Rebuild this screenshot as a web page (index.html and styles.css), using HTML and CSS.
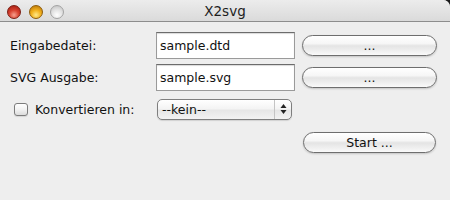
FILE: index.html
```html
<!DOCTYPE html>
<html>
<head>
<meta charset="utf-8">
<link rel="stylesheet" href="styles.css">
</head>
<body>
<div class="window">
  <div class="titlebar">
    <div class="lights">
      <span class="light red"></span>
      <span class="light yellow"></span>
      <span class="light gray"></span>
    </div>
    <div class="title">X2svg</div>
  </div>
  <div class="content">
    <div class="label">Eingabedatei:</div>
    <div class="field">sample.dtd</div>
    <div class="button">...</div>

    <div class="label">SVG Ausgabe:</div>
    <div class="field">sample.svg</div>
    <div class="button">...</div>

    <div class="label check-label"><span class="checkbox"></span>Konvertieren in:</div>
    <div class="popup"><span class="popup-text">--kein--</span><span class="popup-arrows"><svg width="7" height="12" viewBox="0 0 7 12"><path d="M3.5 1 L6.5 5 L0.5 5 Z" fill="#222"/><path d="M3.5 11 L6.5 7 L0.5 7 Z" fill="#222"/></svg></span></div>
    <div class="spacer"></div>

    <div class="spacer"></div>
    <div class="spacer"></div>
    <div class="button start">Start ...</div>
  </div>
</div>
</body>
</html>
```

FILE: styles.css
```css
html, body {
  margin: 0;
  padding: 0;
  background: #1a1a1a;
}
body {
  width: 450px;
  height: 200px;
  overflow: hidden;
  font-family: "DejaVu Sans", "Liberation Sans", sans-serif;
}
.window {
  width: 450px;
  height: 200px;
  background: #eeeeee;
  border-top-right-radius: 7px;
  overflow: hidden;
}
.titlebar {
  position: relative;
  height: 21px;
  background: linear-gradient(#ececec, #dadada);
  border-bottom: 1px solid #8d8d8d;
}
.lights {
  position: absolute;
  left: 7px;
  top: 5px;
  display: flex;
  gap: 7.5px;
}
.light {
  width: 14px;
  height: 14px;
  border-radius: 50%;
  box-sizing: border-box;
}
.red {
  background: radial-gradient(circle at 50% 75%, #f7a08e 0%, #d8412f 45%, #9c1a10 100%);
  border: 1px solid #7b1d12;
}
.yellow {
  background: radial-gradient(circle at 50% 75%, #ffe98a 0%, #f2b11e 45%, #b06d05 100%);
  border: 1px solid #8d5c0c;
}
.gray {
  background: radial-gradient(circle at 50% 75%, #ffffff 0%, #e2e2e2 50%, #bdbdbd 100%);
  border: 1px solid #a3a3a3;
}
.title {
  text-align: center;
  font-size: 13.5px;
  line-height: 23px;
  color: #1e1e1e;
}
.content {
  display: grid;
  grid-template-columns: 146px 146px 135px;
  grid-template-rows: 27px 27px 26px 26px;
  row-gap: 5px;
  padding: 10px 0 0 10px;
  align-items: center;
}
.label {
  font-size: 12.5px;
  color: #111;
}
.check-label {
  display: flex;
  align-items: center;
  margin-left: 4px;
}
.checkbox {
  width: 14px;
  height: 13px;
  box-sizing: border-box;
  border: 1px solid #7c7c7c;
  border-radius: 3px;
  background: linear-gradient(#ffffff, #f2f2f2 50%, #dcdcdc 100%);
  margin-right: 7px;
  box-shadow: 0 1px 1px rgba(0,0,0,0.1);
}
.field {
  width: 139px;
  height: 27px;
  box-sizing: border-box;
  background: #fff;
  border: 1px solid #9a9a9a;
  border-top-color: #6c6c6c;
  box-shadow: inset 0 1px 1px rgba(0,0,0,0.15);
  font-size: 12.5px;
  color: #111;
  padding-left: 3px;
  line-height: 25px;
}
.button {
  height: 21px;
  box-sizing: border-box;
  border: 1px solid #6e6e6e;
  border-radius: 11px;
  background: linear-gradient(#ffffff 0%, #f6f6f6 40%, #e4e4e4 52%, #f0f0f0 80%, #fafafa 100%);
  box-shadow: 0 1px 2px rgba(0,0,0,0.18);
  text-align: center;
  font-size: 12.5px;
  line-height: 19px;
  color: #111;
}
.start {
  align-self: end;
  margin-left: 1px;
  margin-right: 1px;
}
.popup {
  width: 135px;
  height: 21px;
  margin-left: 1px;
  box-sizing: border-box;
  border: 1px solid #7e7e7e;
  border-radius: 5px;
  background: linear-gradient(#ffffff 0%, #f4f4f4 45%, #e6e6e6 55%, #f2f2f2 100%);
  box-shadow: 0 1px 1px rgba(0,0,0,0.12);
  display: flex;
  align-items: center;
  font-size: 12.5px;
  color: #111;
}
.popup-text {
  flex: 1;
  padding-left: 4px;
}
.popup-arrows {
  width: 16px;
  height: 19px;
  border-left: 1px solid #c4c4c4;
  display: flex;
  align-items: center;
  justify-content: center;
}
```
